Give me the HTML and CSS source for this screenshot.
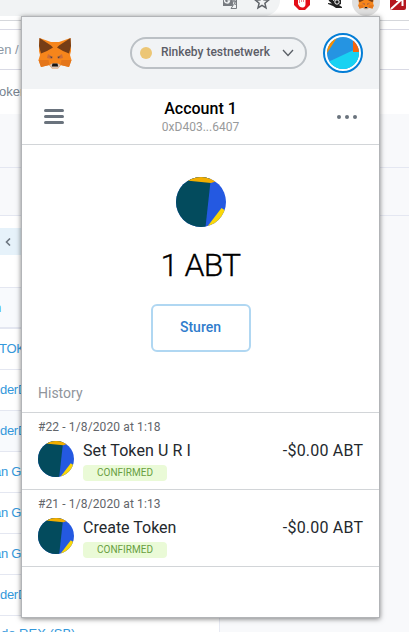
FILE: index.html
```
<!DOCTYPE html>
<html lang="nl">
<head>
<meta charset="utf-8">
<title>Wallet</title>
<link rel="stylesheet" href="styles.css">
</head>
<body>
<svg class="defs" width="0" height="0">
  <defs>
    <clipPath id="round"><circle cx="25" cy="25" r="25"/></clipPath>
    <symbol id="token" viewBox="0 0 50 50">
      <g clip-path="url(#round)">
        <path fill="#2459e1" d="M0 0h50v50H0z"/>
        <path fill="#034b5d" d="M0 0h35L29.500 50H0z"/>
        <path fill="#f2ae00" d="M0 2.500L35 6L50 1V0H0z"/>
        <path fill="#fad709" d="M31 50L45.500 31L50 34V50z"/>
      </g>
    </symbol>
    <symbol id="fox" viewBox="0 0 34 32">
      <path fill="#f6851b" d="M1.500 1L13 5h8L32.500 1 33 14l-1 4 1.500 5L31 30l-8-2-3 3.500h-6L11 28l-8 2L.5 23 2 18 1 14z"/>
      <path fill="#763d16" d="M1.500 1L13 8.500l2 2-6 3.500-6 2.500L1 9zM32.500 1L21 8.500l-2 2 6 3.500 6 2.500L33 9z"/>
      <path fill="#e4761b" d="M.5 23h10l1 5-8.500 2zM33.500 23h-10l-1 5 8.500 2z"/>
      <path fill="#cd6f3a" d="M10 17l5 3-1 2-5-1zM24 17l-5 3 1 2 5-1z"/>
      <path fill="#4b4540" d="M11.500 19.500l3 .3-1 1.400zM22.500 19.500l-3 .3 1 1.400z"/>
      <path fill="#d7c1b3" d="M11.500 28l2.500-1.500h6l2.500 1.500-2.500 3.500h-6z"/>
      <path fill="#161616" d="M14.500 26.500h5l.7 3h-6.400z"/>
    </symbol>
  </defs>
</svg>
<div class="page">
  <div class="toolbar">
    <div class="omnibox">
      <svg class="translate" viewBox="0 0 16 16"><path fill="#777b80" d="M1 0h8l3 12H1z"/><path fill="none" stroke="#f1f3f4" stroke-width="1.300" d="M8 4H5a2.500 2.500 0 1 0 2.500 3H5.500"/><path fill="#f1f3f4" stroke="#777b80" d="M9.500 3.500h5v11H9l2-3z"/><path fill="none" stroke="#777b80" d="M10 7h4M12 6v1c0 2 1 3 2 4M13.500 7c0 2-1 3-2 4"/></svg>
      <svg class="star" viewBox="0 0 16 16"><path fill="none" stroke="#5f6368" stroke-width="1.500" d="M8 1.500l1.800 4.300 4.700.4-3.600 3.100 1.100 4.600-4-2.500-4 2.500 1.100-4.600L1.500 6.200l4.700-.4z"/></svg>
    </div>
    <svg class="ext hand" viewBox="0 0 16 16"><path fill="#e40d17" d="M5 0h6l5 5v6l-5 5H5l-5-5V5z"/><path fill="#fff" d="M4 5h1.500v4H6V3h1.500v5H8V2.500h1.500V8h.5V4h1.500v6c0 2-1 3.500-3 3.500S5 12.500 4 10z"/></svg>
    <svg class="ext bug" viewBox="0 0 16 16"><path fill="#222" d="M1 5h5v3l2-1V3h6v8l-2 1 3 2v1H9l-3-2-5-2v-1l4 .5L2 8z"/><circle cx="10" cy="9" r="2.200" fill="none" stroke="#fff"/></svg>
    <div class="active"><svg viewBox="0 0 34 32"><use href="#fox"/></svg></div>
    <svg class="ext arrow" viewBox="0 0 16 16"><path fill="#b51820" d="M0 0h16v14a2 2 0 0 1-2 2H2a2 2 0 0 1-2-2z"/><path fill="none" stroke="#fff" stroke-width="2" d="M1 15L12 5M6 6h6.500v6"/></svg>
  </div>
  <div class="strip"></div>
  <div class="crumb">en /</div>
  <div class="name">oken</div>
  <div class="band"></div>
  <div class="band second"></div>
  <div class="card">
    <div class="pager"><span class="prev"><svg viewBox="0 0 6 8"><path fill="none" stroke="#6c7680" stroke-width="1.600" d="M5 .5L1.500 4 5 7.500"/></svg></span></div>
    <div class="head">n</div>
    <div class="row tok">TOK</div>
    <div class="row">derD</div>
    <div class="row hover">derD</div>
    <div class="row an">an G</div>
    <div class="row an">an G</div>
    <div class="row an">an G</div>
    <div class="row">derD</div>
    <div class="row last">do REX (SB)</div>
  </div>
</div>

<main class="popup">
  <header class="top">
    <svg class="logo"><use href="#fox"/></svg>
    <div class="network"><i class="dot"></i><span>Rinkeby testnetwerk</span><svg class="chev" viewBox="0 0 12 8"><path fill="none" stroke="#5b6067" stroke-width="1.300" d="M1 1l5 5.500L11 1"/></svg></div>
    <svg class="avatar" viewBox="0 0 40 40">
      <defs><clipPath id="av"><circle cx="20" cy="20" r="16"/></clipPath></defs>
      <circle cx="20" cy="20" r="19" fill="#fff" stroke="#037dd6" stroke-width="2"/>
      <g clip-path="url(#av)"><path fill="#2594e2" d="M0 0h40v40H0z"/><path fill="#18d2f2" d="M0 31.500L40 12.500V40H0z"/><path fill="#fa8e00" d="M0 0h17L4 20H0z"/><path fill="#f8640a" d="M30 0h10v19H30z"/></g>
    </svg>
  </header>
  <section class="account">
    <div class="menu"><i></i><i></i><i></i></div>
    <div class="who"><b>Account 1</b><span>0xD403...6407</span></div>
    <div class="more"><i></i><i></i><i></i></div>
  </section>
  <section class="balance">
    <svg class="coin"><use href="#token"/></svg>
    <div class="amount">1 ABT</div>
    <button>Sturen</button>
  </section>
  <h2>History</h2>
  <article>
    <div class="date">#22 - 1/8/2020 at 1:18</div>
    <div class="tx"><svg><use href="#token"/></svg><div class="info"><div class="title uri">Set Token U R I</div><span class="status">CONFIRMED</span></div><div class="value">-$0.00 ABT</div></div>
  </article>
  <article>
    <div class="date">#21 - 1/8/2020 at 1:13</div>
    <div class="tx"><svg><use href="#token"/></svg><div class="info"><div class="title">Create Token</div><span class="status">CONFIRMED</span></div><div class="value">-$0.00 ABT</div></div>
  </article>
</main>
</body>
</html>
```
FILE: styles.css
```
* { box-sizing: border-box; }
body { margin: 0; width: 409px; height: 632px; overflow: hidden; position: relative; font-family: Roboto, sans-serif; background: #f8f9fb; }
svg { display: block; flex: none; }
.defs { position: absolute; }
.page { height: 632px; overflow: hidden; font-family: "Liberation Sans", sans-serif; font-size: 13px; }
.toolbar { height: 21px; background: #fff; border-bottom: 1px solid #d5d7db; display: flex; align-items: flex-start; }
.omnibox { width: 280px; height: 16px; flex: none; background: #f1f3f4; border-radius: 0 0 16px 0; display: flex; padding-left: 222px; gap: 16px; }
.translate { width: 16px; height: 16px; margin-top: -6px; }
.star { width: 16px; height: 16px; margin-top: -6px; }
.ext { width: 16px; height: 16px; margin-top: -6px; }
.hand { margin-left: 14px; }
.bug { margin-left: 17px; margin-top: -7px; }
.active { width: 28px; height: 28px; border-radius: 50%; background: #dfdfdf; margin: -12px 0 0 9px; padding: 6px; flex: none; }
.active svg { width: 16px; height: 16px; }
.arrow { margin-left: 10px; }
.strip { height: 9px; background: #fff; border-bottom: 1px solid #d9dae5; }
.crumb { height: 40px; line-height: 39px; background: #fff; color: #8c98a4; border-bottom: 1px solid #d9dae5; text-indent: -3px; }
.name { height: 44px; line-height: 43px; background: #fff; color: #77838f; text-indent: -1px; }
.band { height: 54px; border-bottom: 1px solid #e4e7f1; }
.second { height: 48px; }
.card { width: 220px; height: 416px; background: #fff; border-right: 1px solid #e7eaf3; }
.pager { height: 72px; padding-top: 12px; border-bottom: 1px solid #e4e7f1; }
.prev { display: flex; align-items: center; width: 30px; height: 27px; padding-left: 5px; background: #e6f2fa; }
.prev svg { width: 6px; height: 8px; }
.head { height: 41px; line-height: 39px; background: #f8fafd; border-bottom: 2px solid #e4e7f1; color: #3498db; text-indent: -6px; }
.row { height: 41px; line-height: 40px; border-bottom: 1px solid #e4e7f1; color: #3498db; white-space: nowrap; letter-spacing: -.3px; }
.tok { text-indent: -1px; }
.an { text-indent: -6px; }
.last { line-height: 36px; text-indent: 1px; letter-spacing: 0; }
.hover { background: #f8fafd; }
.popup { position: absolute; left: 21px; top: 16px; width: 359px; height: 602px; background: #fff; border: 1px solid #b2b4b7; box-shadow: 0 1px 5px rgba(0,0,0,.5); }
.top { height: 72px; background: #f1f3f5; display: flex; align-items: center; padding: 0 16px; }
.logo { width: 34px; height: 32px; }
.network { width: 177px; height: 32px; margin-left: 58px; border: 2px solid #bbc0c5; border-radius: 16px; display: flex; align-items: center; padding: 0 11px 0 8px; font-size: 12px; font-weight: 500; color: #5b5d67; white-space: nowrap; }
.network span { margin-top: -2px; }
.dot { width: 12px; height: 12px; border-radius: 50%; background: #ecc675; margin-right: 9px; }
.chev { width: 12px; height: 8px; margin-left: auto; }
.avatar { width: 40px; height: 40px; margin-left: auto; }
.account { height: 56px; border-bottom: 1px solid #d2d5d8; display: flex; align-items: center; justify-content: space-between; padding: 0 22px; }
.menu { width: 20px; display: grid; gap: 3px; }
.menu i { height: 3px; border-radius: 2px; background: #6a737d; }
.who { display: grid; text-align: center; padding-top: 2px; }
.who b { font-weight: 500; font-size: 16px; line-height: 18px; color: #000; }
.who span { font-size: 12px; line-height: 18px; color: #989a9b; }
.more { display: flex; gap: 4px; }
.more i { width: 4px; height: 4px; border-radius: 50%; background: #6a737d; }
.balance { height: 222px; padding-top: 32px; display: flex; flex-direction: column; align-items: center; }
.coin { width: 50px; height: 50px; }
.amount { margin-top: 16px; font-size: 32px; line-height: 45px; color: #000; font-weight: 300; letter-spacing: -.8px; -webkit-text-stroke: .3px #000; }
button { width: 100px; height: 48px; margin-top: 16px; border: 2px solid #b0d7f2; border-radius: 6px; background: #fff; color: #2f7ccc; font: 500 14px Roboto, sans-serif; padding: 0 0 3px; }
h2 { margin: 0; height: 46px; padding: 16px 16px 0; font-size: 14px; line-height: 20px; font-weight: 400; color: #90959c; border-bottom: 1px solid #d2d5d8; }
article { height: 77px; padding: 6px 16px 0; border-bottom: 1px solid #d2d5d8; }
.date { font-size: 12px; line-height: 17px; letter-spacing: .12px; color: #62656a; }
.tx { display: flex; margin-top: 5px; }
.tx svg { width: 36px; height: 36px; }
.info { margin-left: 9px; flex: 1; }
.title, .value { font-size: 16px; line-height: 20px; color: #24292e; }
.uri { letter-spacing: .1px; }
.value { letter-spacing: .2px; margin-right: -.2px; }
.status { display: flex; align-items: center; justify-content: center; width: 84px; height: 16px; margin-top: 4px; border-radius: 4px; background: #eafad7; color: #689f3f; font-size: 10px; line-height: 16px; }
```
